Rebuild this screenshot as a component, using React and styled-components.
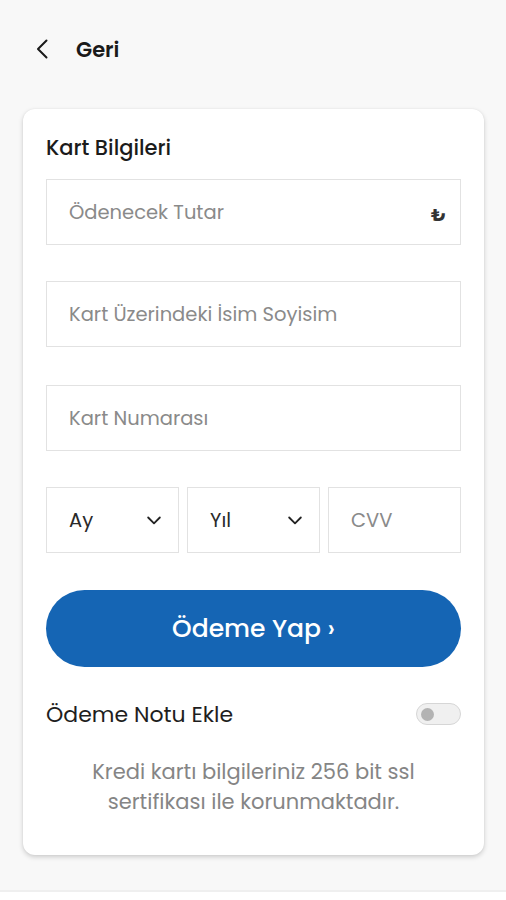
import React from 'react'
import styled, { createGlobalStyle } from 'styled-components'

const Global = createGlobalStyle`
  html, body {
    margin: 0;
    padding: 0;
    background: #ffffff;
  }
  body {
    font-family: Poppins, 'Open Sans', 'Noto Sans', sans-serif;
  }
`

const Page = styled.div`
  height: 892px;
  background: #f8f8f8;
  border-bottom: 2px solid #efefef;
  box-sizing: border-box;
`

const Header = styled.div`
  display: flex;
  align-items: center;
  gap: 28px;
  height: 100px;
  padding: 0 0 2px 36px;
  box-sizing: border-box;
`

const BackText = styled.span`
  font-size: 21px;
  font-weight: 600;
  color: #1a1a1a;
`

const Card = styled.div`
  margin: 9px 22px 0 23px;
  background: #fff;
  border-radius: 12px;
  box-shadow: 0 2px 5px rgba(0, 0, 0, 0.18), 0 0 2px rgba(0, 0, 0, 0.06);
  padding: 23px 23px 38px 23px;
  display: flex;
  flex-direction: column;
`

const Title = styled.div`
  font-size: 21px;
  line-height: 32px;
  font-weight: 500;
  color: #1b1b1b;
  margin-bottom: 15px;
`

const Field = styled.div`
  height: 66px;
  border: 1px solid #e2e2e2;
  box-sizing: border-box;
  display: flex;
  align-items: center;
  justify-content: space-between;
  padding: 0 14px 0 22px;
  margin-bottom: ${p => p.$mb ?? 38}px;
  font-size: 19.5px;
  color: ${p => (p.$dark ? '#2a2a2a' : '#8a8a8a')};
`

const Lira = styled.span`
  font-size: 18px;
  font-weight: 700;
  color: #333;
  margin-top: 4px;
`

const Row = styled.div`
  display: grid;
  grid-template-columns: 1fr 1fr 1fr;
  gap: 8px;
  margin-bottom: 37px;
  & > div {
    margin-bottom: 0;
  }
`

const Button = styled.button`
  height: 77px;
  border: none;
  border-radius: 40px;
  background: #1565b4;
  color: #fff;
  font-family: inherit;
  font-size: 25px;
  font-weight: 500;
  cursor: pointer;
`

const NoteRow = styled.div`
  display: flex;
  align-items: center;
  justify-content: space-between;
  margin-top: 31px;
  height: 32px;
`

const NoteLabel = styled.span`
  font-size: 22px;
  color: #1e1e1e;
`

const Toggle = styled.div`
  width: 45px;
  height: 22px;
  border-radius: 11px;
  background: #f0f0f0;
  border: 1px solid #d6d6d6;
  box-sizing: border-box;
  display: flex;
  align-items: center;
  padding-left: 4px;
  &::before {
    content: '';
    width: 13px;
    height: 13px;
    border-radius: 50%;
    background: #b3b3b3;
  }
`

const Note = styled.p`
  margin: 27px 0 0;
  text-align: center;
  font-size: 21px;
  line-height: 30px;
  color: #858585;
`

const ChevronDown = () => (
  <svg width="20" height="20" viewBox="0 0 24 24" fill="none" stroke="#222" strokeWidth="2.2" strokeLinecap="round" strokeLinejoin="round">
    <path d="M5 9l7 7 7-7" />
  </svg>
)

const ChevronLeft = () => (
  <svg width="12" height="20" viewBox="0 0 12 20" fill="none" stroke="#1a1a1a" strokeWidth="2" strokeLinecap="round" strokeLinejoin="round">
    <path d="M10.5 1.5L2 10l8.5 8.5" />
  </svg>
)

export default function App() {
  return (
    <>
      <Global />
      <Page>
        <Header>
          <ChevronLeft />
          <BackText>Geri</BackText>
        </Header>
        <Card>
          <Title>Kart Bilgileri</Title>
          <Field $mb={36}>
            Ödenecek Tutar
            <Lira>₺</Lira>
          </Field>
          <Field>Kart Üzerindeki İsim Soyisim</Field>
          <Field $mb={36}>Kart Numarası</Field>
          <Row>
            <Field $dark>
              Ay
              <ChevronDown />
            </Field>
            <Field $dark>
              Yıl
              <ChevronDown />
            </Field>
            <Field>CVV</Field>
          </Row>
          <Button>Ödeme Yap ›</Button>
          <NoteRow>
            <NoteLabel>Ödeme Notu Ekle</NoteLabel>
            <Toggle />
          </NoteRow>
          <Note>
            Kredi kartı bilgileriniz 256 bit ssl
            <br />
            sertifikası ile korunmaktadır.
          </Note>
        </Card>
      </Page>
    </>
  )
}
